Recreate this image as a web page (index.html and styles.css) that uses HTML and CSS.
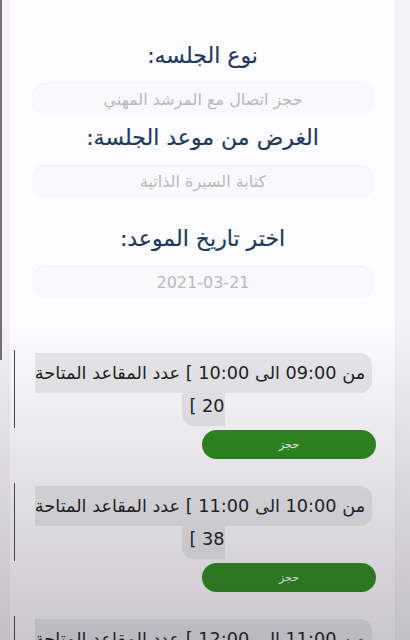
FILE: index.html
```html
<!DOCTYPE html>
<html lang="ar">
<head>
	<meta charset="utf-8" />
	<title>حجز موعد</title>
	<link rel="stylesheet" href="styles.css">
</head>
<body>
<div class="page">
	<div class="edge-left"></div>
	<div class="main" dir="rtl">
		<h2 class="label first">نوع الجلسه:</h2>
		<div class="field">حجز اتصال مع المرشد المهني</div>
		<h2 class="label">الغرض من موعد الجلسة:</h2>
		<div class="field">كتابة السيرة الذاتية</div>
		<h2 class="label spaced">اختر تاريخ الموعد:</h2>
		<div class="field date">2021-03-21</div>

		<div class="slots">
			<div class="slot">
				<div class="slot-text"><span>من 09:00 الى 10:00 ] عدد المقاعد المتاحة 20 ]</span></div>
				<button class="book">حجز</button>
			</div>
			<div class="slot">
				<div class="slot-text"><span>من 10:00 الى 11:00 ] عدد المقاعد المتاحة 38 ]</span></div>
				<button class="book">حجز</button>
			</div>
			<div class="slot">
				<div class="slot-text"><span>من 11:00 الى 12:00 ] عدد المقاعد المتاحة 12 ]</span></div>
				<button class="book">حجز</button>
			</div>
		</div>
	</div>
	<div class="edge-right"></div>
</div>
</body>
</html>
```

FILE: styles.css
```css
body{
	margin: 0px;
	padding: 0px;
	background-color: #fdfcfe;
	font-family: "DejaVu Sans", sans-serif;
}
body::after{
	content: "";
	position: fixed;
	left: 0px;
	right: 0px;
	top: 320px;
	bottom: 0px;
	background: linear-gradient(rgba(40,35,50,0), rgba(40,35,50,.24));
	pointer-events: none;
}
.page{
	display: flex;
	min-height: 640px;
}
.edge-left{
	width: 10px;
	flex-shrink: 0;
	background: linear-gradient(to right, #727272 0px, #727272 2px, #f6f2f6 2px) no-repeat;
	background-size: 100% 360px;
	background-color: #f3f1f4;
}
.edge-right{
	width: 14px;
	flex-shrink: 0;
	background-color: #f3f2f5;
	border-left: 1px solid #eeedf0;
}
.main{
	flex: 1;
	padding-top: 40px;
}
.label{
	margin: 0px;
	text-align: center;
	font-size: 22px;
	font-weight: normal;
	line-height: 32px;
	color: #1e3a5f;
	-webkit-text-stroke: 0.2px #1e3a5f;
}
.label.spaced{
	margin-top: 25px;
}
.field{
	margin: 12px 21px 6px 22px;
	height: 32px;
	line-height: 32px;
	text-align: center;
	font-size: 16px;
	color: #b8b8bc;
	background-color: #f9f9fb;
	border-radius: 14px;
	box-shadow: 0px -1px 1px rgba(0,0,0,.05);
}
.slots{
	margin-top: 51px;
}
.slot{
	margin: 0px 0px 24px 0px;
	padding-left: 4px;
}
.slot-text{
	margin-right: 21px;
	padding: 7px 0px 5px 18px;
	border-left: 1px solid #4a4a4a;
	text-align: center;
	font-size: 17.7px;
	line-height: 33px;
	color: #222;
}
.slot-text span{
	background-color: #e9e9ec;
	padding: 10px 7px;
	border-radius: 12px;
}
.book{
	display: block;
	width: 174px;
	height: 29px;
	margin: 2px 19px 0px 0px;
	border: none;
	border-radius: 15px;
	background-color: #2e8b1e;
	color: #fff;
	font-family: "DejaVu Sans", sans-serif;
	font-size: 11px;
}
```
